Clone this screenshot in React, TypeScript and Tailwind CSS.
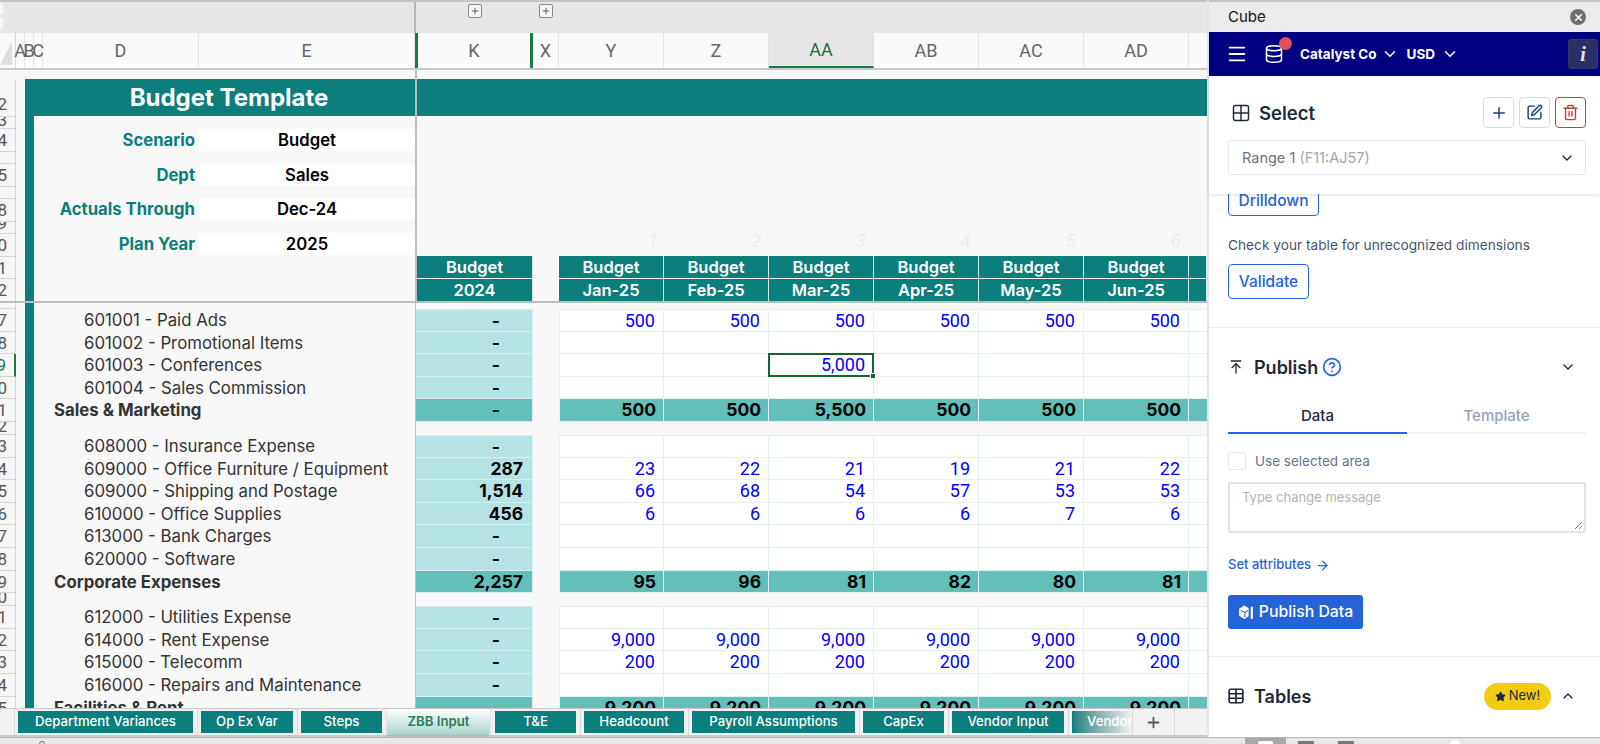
import React from 'react';
import { ChevronDown, ChevronUp, Menu, Database, Plus, SquarePen, Trash2, ArrowRight, ArrowUpToLine, CircleHelp, Grid2x2, Table, Star, X } from 'lucide-react';

const sheetFont = { fontFamily: 'Inter, "Liberation Sans", sans-serif' };
const cellFont = { fontFamily: 'Roboto, "Liberation Sans", sans-serif' };

const months = ['Jan-25', 'Feb-25', 'Mar-25', 'Apr-25', 'May-25', 'Jun-25'];
const colHeads = ['Y', 'Z', 'AA', 'AB', 'AC', 'AD'];

type Row = {
  num: string;
  label: string;
  k: string;
  vals: string[];
  total?: boolean;
};

const e = ['', '', '', '', '', ''];
const group1: Row[] = [
  { num: '7', label: '601001 - Paid Ads', k: '-', vals: ['500', '500', '500', '500', '500', '500'] },
  { num: '8', label: '601002 - Promotional Items', k: '-', vals: e },
  { num: '9', label: '601003 - Conferences', k: '-', vals: ['', '', '5,000', '', '', ''] },
  { num: '0', label: '601004 - Sales Commission', k: '-', vals: e },
  { num: '1', label: 'Sales & Marketing', k: '-', vals: ['500', '500', '5,500', '500', '500', '500'], total: true },
];
const group2: Row[] = [
  { num: '3', label: '608000 - Insurance Expense', k: '-', vals: e },
  { num: '4', label: '609000 - Office Furniture / Equipment', k: '287', vals: ['23', '22', '21', '19', '21', '22'] },
  { num: '5', label: '609000 - Shipping and Postage', k: '1,514', vals: ['66', '68', '54', '57', '53', '53'] },
  { num: '6', label: '610000 - Office Supplies', k: '456', vals: ['6', '6', '6', '6', '7', '6'] },
  { num: '7', label: '613000 - Bank Charges', k: '-', vals: e },
  { num: '8', label: '620000 - Software', k: '-', vals: e },
  { num: '9', label: 'Corporate Expenses', k: '2,257', vals: ['95', '96', '81', '82', '80', '81'], total: true },
];
const group3: Row[] = [
  { num: '1', label: '612000 - Utilities Expense', k: '-', vals: e },
  { num: '2', label: '614000 - Rent Expense', k: '-', vals: ['9,000', '9,000', '9,000', '9,000', '9,000', '9,000'] },
  { num: '3', label: '615000 - Telecomm', k: '-', vals: ['200', '200', '200', '200', '200', '200'] },
  { num: '4', label: '616000 - Repairs and Maintenance', k: '-', vals: e },
  { num: '5', label: 'Facilities & Rent', k: '-', vals: ['9,200', '9,200', '9,200', '9,200', '9,200', '9,200'], total: true },
];

const tabs = [
  { name: 'Department Variances', w: 'w-[175px]' },
  { name: 'Op Ex Var', w: 'w-[92px]' },
  { name: 'Steps', w: 'w-[81px]' },
  { name: 'ZBB Input', w: 'w-[103px]', active: true },
  { name: 'T&E', w: 'w-[81px]' },
  { name: 'Headcount', w: 'w-[100px]' },
  { name: 'Payroll Assumptions', w: 'w-[163px]' },
  { name: 'CapEx', w: 'w-[81px]' },
  { name: 'Vendor Input', w: 'w-[112px]' },
];

function GutterNum({ num, selected, lead }: { num: string; selected?: boolean; lead: string }) {
  return (
    <div className={`flex w-[16px] shrink-0 justify-end overflow-hidden border-b border-r border-[#d4d4d4] bg-[#f6f6f6] pr-[8px] text-[17px] ${lead} ${selected ? 'border-r-2 border-r-[#1b7a43] text-[#1b7a43]' : 'text-[#555]'}`} style={cellFont}>
      <span>{num}</span>
    </div>
  );
}

function SheetRow({ row, selected, first }: { row: Row; selected?: boolean; first?: boolean }) {
  return (
    <div className="flex h-[22.6px]">
      <GutterNum num={row.num} selected={selected} lead="leading-[23px]" />
      <div className="flex w-[400px] shrink-0 border-r border-[#bdbdbd] bg-[#f8f8f8]">
        <div className="ml-[9px] w-[9px] shrink-0 bg-[#0c7e7c]" />
        {row.total ? (
          <div className="whitespace-nowrap pl-[20px] text-[16.8px] font-bold leading-[22px] text-[#333]">{row.label}</div>
        ) : (
          <div className="whitespace-nowrap pl-[50px] text-[16.8px] leading-[22px] text-[#333]">{row.label}</div>
        )}
      </div>
      <div className={`w-[117px] shrink-0 border-b border-r border-[#d6efef] text-right text-[17.5px] font-bold leading-[22px] text-black ${row.k === '-' ? 'pr-[32px]' : 'pr-[9px]'} ${first ? 'border-t' : ''} ${row.total ? 'bg-[#62c0b9]' : 'bg-[#b5e3e3]'}`}>
        {row.k}
      </div>
      <div className="w-[26px] shrink-0 bg-[#f8f8f8]" />
      {row.vals.map((v, i) => (
        <div
          key={i}
          className={`relative w-[105px] shrink-0 border-b border-r border-[#dff1f1] text-right leading-[22px] ${first ? 'border-t' : ''} ${i === 0 ? 'border-l' : ''} ${selected && v !== '' ? 'z-10' : ''} ${row.total ? 'bg-[#62c0b9] pr-[7px] text-[17.5px] font-bold text-black' : 'bg-white pr-[8px] text-[18px] text-[#0000ff]'}`}
          style={row.total ? undefined : cellFont}
        >
          {v}
          {selected && v !== '' && (
            <>
              <div className="absolute -left-px -top-px bottom-[-1px] right-[-1px] border-2 border-[#14662c]" />
              <div className="absolute -bottom-[3px] -right-[3px] h-[6px] w-[6px] border border-white bg-[#14662c]" />
            </>
          )}
        </div>
      ))}
      <div className={`w-[20px] shrink-0 border-b border-[#dff1f1] ${first ? 'border-t' : ''} ${row.total ? 'bg-[#62c0b9]' : 'bg-white'}`} />
    </div>
  );
}

function Spacer({ num, h }: { num: string; h: string }) {
  return (
    <div className={`flex ${h}`}>
      <GutterNum num={num} lead="leading-[8px]" />
      <div className="flex w-[400px] shrink-0 border-r border-[#bdbdbd] bg-[#f8f8f8]">
        <div className="ml-[9px] w-[9px] bg-[#0c7e7c]" />
      </div>
      <div className="flex-1 bg-[#f8f8f8]" />
    </div>
  );
}

function InfoRow({ label, value }: { label: string; value: string }) {
  return (
    <div className="flex h-[22px] items-center">
      <div className="w-[165px] shrink-0 pr-[4px] pt-[2px] text-right text-[16.7px] font-bold text-[#0c7e7c]">{label}</div>
      <div className="flex h-full flex-1 items-center justify-center bg-white pt-[2px] text-[16.7px] font-semibold text-black">{value}</div>
    </div>
  );
}

function TopPane() {
  const nums = [
    { n: '2', h: 'h-[37px]', lead: 'leading-[48px]' },
    { n: '3', h: 'h-[12px]', lead: 'leading-[6px]' },
    { n: '4', h: 'h-[23px]', lead: 'leading-[23px]' },
    { n: '', h: 'h-[12px]', lead: 'leading-[8px]' },
    { n: '5', h: 'h-[23px]', lead: 'leading-[23px]' },
    { n: '', h: 'h-[12px]', lead: 'leading-[8px]' },
    { n: '8', h: 'h-[23px]', lead: 'leading-[23px]' },
    { n: '9', h: 'h-[12px]', lead: 'leading-[2px]' },
    { n: '0', h: 'h-[23px]', lead: 'leading-[23px]' },
    { n: '1', h: 'h-[22px]', lead: 'leading-[23px]' },
    { n: '2', h: 'h-[23px]', lead: 'leading-[23px]' },
  ];
  return (
    <div className="flex h-[233px] border-b-2 border-[#bdbdbd]">
      <div className="w-[16px] shrink-0 overflow-hidden bg-[#f6f6f6] pt-[10px]">
        {nums.map((x, i) => (
          <div key={i} className={`${x.h} flex justify-end overflow-hidden border-b border-r border-[#d4d4d4] pr-[8px] text-[17px] ${x.lead} text-[#555]`} style={cellFont}><span>{x.n}</span></div>
        ))}
      </div>
      <div className="flex w-[399px] shrink-0 flex-col bg-[#f8f8f8] pt-[9px]">
        <div className="ml-[9px] flex h-[37px] items-center justify-center bg-[#0c7e7c] pl-[18px] text-[24px] font-bold text-white">Budget Template</div>
        <div className="ml-[9px] flex flex-1 border-l-[9px] border-[#0c7e7c]">
          <div className="flex flex-1 flex-col gap-[12.5px] pt-[13px]">
            <InfoRow label="Scenario" value="Budget" />
            <InfoRow label="Dept" value="Sales" />
            <InfoRow label="Actuals Through" value="Dec-24" />
            <InfoRow label="Plan Year" value="2025" />
          </div>
        </div>
      </div>
      <div className="flex w-[794px] shrink-0 flex-col border-l-2 border-[#bdbdbd] bg-[#f8f8f8] pt-[9px]">
        <div className="h-[37px] bg-[#0c7e7c]" />
        <div className="flex h-[142px]">
          <div className="w-[142px] shrink-0" />
          {['1', '2', '3', '4', '5', '6'].map((n) => (
            <div key={n} className="flex h-full w-[105px] items-end justify-end pb-[2px] pr-[8px] text-[17px] italic text-[#ececec]">{n}</div>
          ))}
        </div>
        <div className="flex h-[22px]">
          <HeadCell w="w-[116px]" text="Budget" />
          <div className="w-[26px] shrink-0" />
          {months.map((m) => <HeadCell key={m} w="w-[105px]" text="Budget" />)}
          <HeadCell w="w-[18px]" text="" />
        </div>
        <div className="mt-px flex h-[22px]">
          <HeadCell w="w-[116px]" text="2024" />
          <div className="w-[26px] shrink-0" />
          {months.map((m) => <HeadCell key={m} w="w-[105px]" text={m} />)}
          <HeadCell w="w-[18px]" text="" />
        </div>
      </div>
    </div>
  );
}

function HeadCell({ w, text }: { w: string; text: string }) {
  return (
    <div className={`${w} shrink-0 border-r border-[#cfe8e8] bg-[#0c7e7c] text-center text-[16.5px] font-semibold leading-[22px] text-white`}>{text}</div>
  );
}

function TabSep() {
  return <div className="mx-[3.5px] h-[26px] w-px shrink-0 bg-[#d8d8d8]" />;
}

function Sheet() {
  return (
    <div className="flex w-[1207px] shrink-0 flex-col" style={sheetFont}>
      <div className="flex h-[33px] border-t-2 border-[#c4c4c4] bg-[#e6e6e6]">
        <div className="flex w-[416px] shrink-0 flex-col gap-[4px] border-r-2 border-[#b5b5b5] pt-[1px]">
          <div className="h-[11px] w-[3px] bg-[#f6f6f6]" />
          <div className="h-[11px] w-[3px] bg-[#f6f6f6]" />
        </div>
        <div className="relative flex-1 pl-[52px] pt-[2px]">
          <div className="flex gap-[57px]">
            <OutlineBtn />
            <OutlineBtn />
          </div>
        </div>
      </div>
      <div className="flex h-[37px] border-b-2 border-[#c9c9c9] bg-[#fafafa] text-[18px] text-[#666]" style={cellFont}>
        <div className="flex w-[16px] shrink-0 items-end border-r border-[#d4d4d4] bg-[#fafafa] pb-[3px]">
          <svg width="12" height="24" viewBox="0 0 12 24"><path d="M12 0V24H0z" fill="#dedede" /></svg>
        </div>
        <ColHead w="w-[9px]" text="A" />
        <ColHead w="w-[9px]" text="B" />
        <ColHead w="w-[9px]" text="C" />
        <ColHead w="w-[156px]" text="D" />
        <ColHead w="w-[216px]" text="E" />
        <div className="flex w-[118px] shrink-0 items-center justify-center border-x-[3px] border-x-[#1b7a43]">K</div>
        <ColHead w="w-[26px]" text="X" />
        {colHeads.map((c) => (
          c === 'AA' ? (
            <div key={c} className="flex w-[105px] shrink-0 items-center justify-center border-b-2 border-r border-b-[#1b7a43] border-r-[#e4e4e4] bg-[#e6e6e6] text-[#1b6b3f]">{c}</div>
          ) : (
            <ColHead key={c} w="w-[105px]" text={c} />
          )
        ))}
      </div>
      <TopPane />
      <div className="h-[405px] overflow-hidden">
        <Spacer num="" h="h-[6px]" />
        {group1.map((r, i) => <SheetRow key={i} row={r} selected={i === 2} first={i === 0} />)}
        <Spacer num="2" h="h-[13px]" />
        {group2.map((r, i) => <SheetRow key={i} row={r} first={i === 0} />)}
        <Spacer num="0" h="h-[13px]" />
        {group3.map((r, i) => <SheetRow key={i} row={r} first={i === 0} />)}
      </div>
      <div className="flex h-[29px] items-center border-b-2 border-t border-[#c9c9c9] bg-[#f1f1f1] pl-[10px]">
        <TabSep />
        {tabs.map((t, i) => (
          t.active ? (
            <div key={t.name} className={`${t.w} mx-[5px] flex h-[26px] items-center justify-center rounded-b-[2px] bg-gradient-to-b from-[#ffffff] to-[#a9d3cd] text-[13.2px] font-semibold text-[#2a7f55] shadow`}>{t.name}</div>
          ) : (
            <React.Fragment key={t.name}>
              <div className={`${t.w} flex h-[22px] items-center justify-center bg-[#0c7e7c] text-[13.2px] font-medium text-white`}>{t.name}</div>
              {tabs[i + 1] && !tabs[i + 1].active ? <TabSep /> : null}
            </React.Fragment>
          )
        ))}
        <TabSep />
        <div className="flex h-[22px] w-[60px] items-center overflow-hidden bg-gradient-to-r from-[#0c7e7c] to-[#f1f1f1] pl-[15px] text-[13.2px] font-medium text-white">Vendor</div>
        <div className="flex h-[26px] w-[43px] items-center justify-center border-x border-[#d8d8d8] text-[#555]">
          <Plus size={17} strokeWidth={2.5} />
        </div>
      </div>
    </div>
  );
}

function ColHead({ w, text }: { w: string; text: string }) {
  return <div className={`${w} flex shrink-0 items-center justify-center border-r border-[#e4e4e4]`}>{text}</div>;
}

function OutlineBtn() {
  return (
    <div className="flex h-[14px] w-[14px] items-center justify-center rounded-[2px] border border-[#888] bg-[#f6f6f6] text-[#444]">
      <Plus size={10} strokeWidth={2} />
    </div>
  );
}

function Panel() {
  return (
    <div className="relative flex min-w-0 flex-1 flex-col border-l-2 border-[#e3e3e3] bg-white" style={{ fontFamily: 'Inter, sans-serif' }}>
      <div className="flex h-[32px] items-center justify-between border-t-2 border-[#c4c4c4] bg-[#ebebeb] pl-[19px] pr-[14px]">
        <span className="text-[15px] text-[#111]">Cube</span>
        <div className="flex h-[16px] w-[16px] items-center justify-center rounded-full bg-[#6f6f6f] text-white">
          <X size={11} strokeWidth={3.5} />
        </div>
      </div>
      <div className="flex h-[44px] items-center bg-[#000080] text-white">
        <Menu size={22} className="ml-[17px]" strokeWidth={2} />
        <div className="relative ml-[16px]">
          <Database size={20} strokeWidth={1.75} />
          <div className="absolute -right-[8px] -top-[7px] h-[13px] w-[13px] rounded-full bg-[#e05252]" />
        </div>
        <span className="ml-[16px] text-[13.5px] font-bold">Catalyst Co</span>
        <ChevronDown size={18} className="ml-[4px]" />
        <span className="ml-[8px] text-[13.5px] font-bold">USD</span>
        <ChevronDown size={18} className="ml-[6px]" />
        <div className="ml-auto mr-[2px] flex h-[30px] w-[30px] items-center justify-center rounded-[3px] border border-[#33366f] bg-[#2c2f66] text-[20px] font-bold italic text-[#e6e6e6]" style={{ fontFamily: '"Liberation Serif", serif' }}>i</div>
      </div>
      <div className="relative z-10 h-[118px] bg-white pl-[19px] pr-[14px] pt-[21px] shadow-[0_1px_4px_rgba(0,0,0,0.12)]">
        <div className="flex h-[31px] items-center">
          <Grid2x2 size={20} className="ml-[3px] text-[#1e293b]" strokeWidth={1.75} />
          <span className="ml-[8px] mt-[2px] text-[18.5px] font-semibold text-[#1e293b]">Select</span>
          <div className="ml-auto flex gap-[5px]">
            <div className="flex h-[31px] w-[31px] items-center justify-center rounded-[4px] border border-[#d5dbe6] text-[#1e3a8a]"><Plus size={18} /></div>
            <div className="flex h-[31px] w-[31px] items-center justify-center rounded-[4px] border border-[#d5dbe6] text-[#1e3a8a]"><SquarePen size={17} /></div>
            <div className="flex h-[31px] w-[31px] items-center justify-center rounded-[4px] border border-[#d33a3a] text-[#d33a3a]"><Trash2 size={17} /></div>
          </div>
        </div>
        <div className="mt-[12px] flex h-[35px] items-center justify-between rounded-[3px] border border-[#e2e8f0] pl-[13px] pr-[10px] text-[14.5px]">
          <span className="text-[#6b7280]">Range 1 <span className="text-[#a0a7b4]">(F11:AJ57)</span></span>
          <ChevronDown size={16} className="text-[#1e293b]" />
        </div>
      </div>
      <div className="flex flex-1 flex-col overflow-hidden pl-[19px] pr-[14px]">
        <div className="-mt-[12px] flex h-[34px] w-[91px] shrink-0 items-center justify-center rounded-[4px] border border-[#2563eb] pt-[3px] text-[15.5px] font-medium text-[#2563d9]">Drilldown</div>
        <p className="mt-[20px] whitespace-nowrap text-[13.7px] leading-[18px] text-[#475569]">Check your table for unrecognized dimensions</p>
        <div className="mt-[10px] flex h-[35px] w-[81px] shrink-0 items-center justify-center rounded-[4px] border border-[#2563eb] text-[15.5px] font-medium text-[#2563d9]">Validate</div>
        <div className="-ml-[19px] -mr-[14px] mt-[28px] border-t border-[#e8edf3]" />
        <div className="mt-[25px] flex h-[28px] shrink-0 items-center">
          <ArrowUpToLine size={16} className="text-[#1e293b]" />
          <span className="ml-[10px] text-[18px] font-semibold text-[#1e293b]">Publish</span>
          <CircleHelp size={20} className="ml-[4px] text-[#2563eb]" />
          <ChevronDown size={16} className="ml-auto mr-[10px] text-[#1e293b]" />
        </div>
        <div className="mt-[19px] flex h-[34px] shrink-0 border-b-2 border-[#f1f3f6] text-[15px]">
          <div className="-mb-[2px] flex w-1/2 items-center justify-center border-b-2 border-[#2563eb] font-medium text-[#1e293b]">Data</div>
          <div className="flex w-1/2 items-center justify-center font-medium text-[#94a3b8]">Template</div>
        </div>
        <div className="mt-[18px] flex h-[18px] shrink-0 items-center">
          <div className="h-[18px] w-[18px] rounded-[2px] border border-[#e2e8f0]" />
          <span className="ml-[9px] text-[13.5px] text-[#64748b]">Use selected area</span>
        </div>
        <div className="relative mt-[12px] h-[51px] shrink-0 rounded-[2px] border-2 border-[#e2e2e2] pl-[12px] pt-[4px] text-[13px] text-[#b4b4b4]">
          Type change message
          <svg className="absolute bottom-[1px] right-[1px]" width="9" height="9" viewBox="0 0 9 9" stroke="#777" fill="none"><path d="M1 8 8 1M5 8 8 5" /></svg>
        </div>
        <div className="mt-[23px] flex h-[18px] shrink-0 items-center text-[13px] font-medium text-[#2563d9]">
          Set attributes
          <ArrowRight size={15} className="ml-[4px]" />
        </div>
        <div className="mt-[21px] flex h-[34px] w-[135px] shrink-0 items-center justify-center gap-[4px] rounded-[3px] bg-[#2563d9] text-[15.8px] font-medium text-white">
          <svg width="17" height="17" viewBox="0 0 16 16" fill="white"><path d="M6 1.5 1 4.5v6.5l5 3 4-2.5V4z" /><path d="M2.5 6 6.5 8v4.5M6.5 8l3-2" stroke="#2563d9" fill="none" /><rect x="12" y="2.5" width="2" height="11.5" /></svg>
          Publish Data
        </div>
        <div className="-ml-[19px] -mr-[14px] mt-[27px] border-t border-[#e8edf3]" />
        <div className="mt-[25px] flex h-[28px] shrink-0 items-center">
          <Table size={18} className="-ml-[1px] text-[#1e293b]" strokeWidth={2.25} />
          <span className="ml-[9px] text-[18px] font-semibold text-[#1e293b]">Tables</span>
          <div className="ml-auto flex h-[27px] w-[67px] items-center justify-center gap-[3px] rounded-full bg-[#f2cc14] text-[13px] text-[#1e293b]">
            <Star size={11} fill="#1e293b" />New!
          </div>
          <ChevronUp size={16} className="ml-[9px] mr-[10px] text-[#1e293b]" />
        </div>
      </div>
    </div>
  );
}

function StatusBar() {
  return (
    <div className="flex h-[7px] items-start overflow-hidden border-t border-[#b5b5b5] bg-[#e8e8e8]">
      <div className="ml-[39px] mt-[3px] h-[6px] w-[6px] rounded-full border border-[#777]" />
      <div className="ml-[1200px] flex h-[7px] w-[41px] justify-center bg-[#a8a8a8] pt-[3px]">
        <div className="h-[6px] w-[15px] rounded-t-[2px] bg-white" />
      </div>
      <div className="ml-[12px] mt-[3px] h-[6px] w-[16px] bg-[#777]" />
      <div className="ml-[24px] mt-[3px] h-[6px] w-[16px] bg-[#777]" />
      <div className="ml-[96px] mt-[2px] h-[10px] w-[10px] rounded-full bg-white" />
    </div>
  );
}

export default function App() {
  return (
    <div className="flex h-[744px] w-[1600px] flex-col overflow-hidden bg-white">
      <div className="flex h-[737px]">
        <Sheet />
        <Panel />
      </div>
      <StatusBar />
    </div>
  );
}
